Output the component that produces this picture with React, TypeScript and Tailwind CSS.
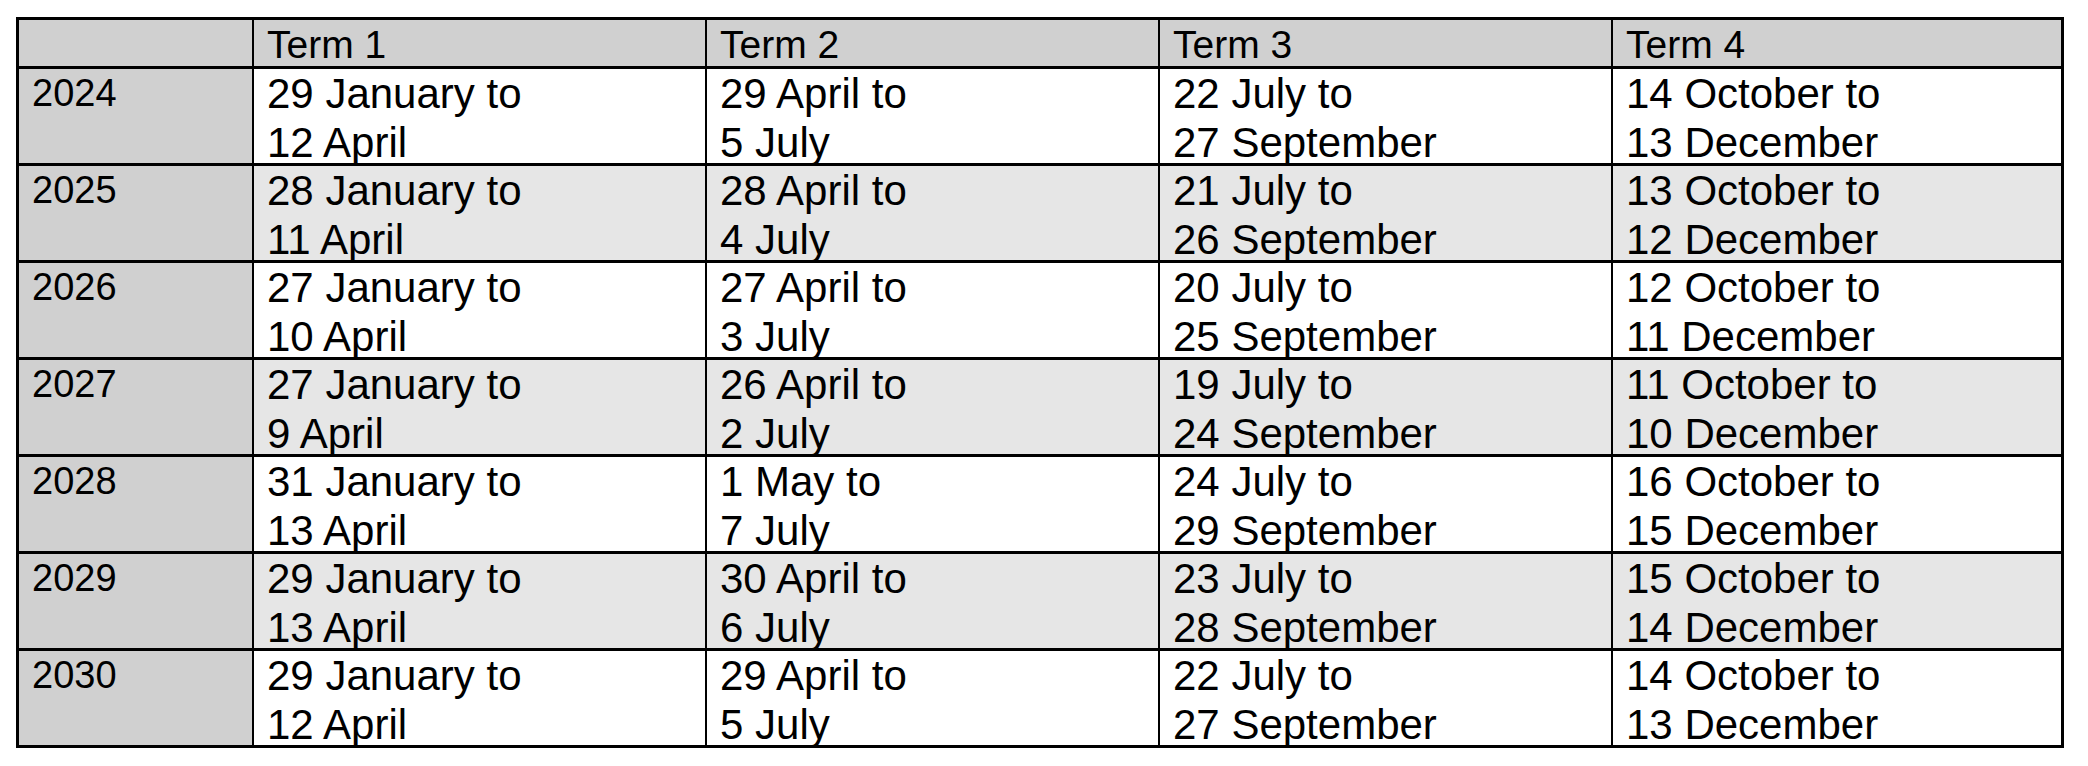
const terms = [
  { year: "2024", dates: [["29 January to", "12 April"], ["29 April to", "5 July"], ["22 July to", "27 September"], ["14 October to", "13 December"]] },
  { year: "2025", dates: [["28 January to", "11 April"], ["28 April to", "4 July"], ["21 July to", "26 September"], ["13 October to", "12 December"]] },
  { year: "2026", dates: [["27 January to", "10 April"], ["27 April to", "3 July"], ["20 July to", "25 September"], ["12 October to", "11 December"]] },
  { year: "2027", dates: [["27 January to", "9 April"], ["26 April to", "2 July"], ["19 July to", "24 September"], ["11 October to", "10 December"]] },
  { year: "2028", dates: [["31 January to", "13 April"], ["1 May to", "7 July"], ["24 July to", "29 September"], ["16 October to", "15 December"]] },
  { year: "2029", dates: [["29 January to", "13 April"], ["30 April to", "6 July"], ["23 July to", "28 September"], ["15 October to", "14 December"]] },
  { year: "2030", dates: [["29 January to", "12 April"], ["29 April to", "5 July"], ["22 July to", "27 September"], ["14 October to", "13 December"]] },
]

const headers = ["Term 1", "Term 2", "Term 3", "Term 4"]

export default function App() {
  return (
    <div className="w-[2088px] h-[766px] bg-white pt-[17px] pl-[16px]" style={{ fontFamily: '"Liberation Sans", Arial, sans-serif' }}>
      <div className="w-[2048px] border-[3px] border-black text-black">
        <div className="grid grid-cols-[233px_453px_453px_453px_450px]">
          {/* header row */}
          <div className="h-[46px] bg-[#d0d0d0]" />
          {headers.map((h) => (
            <div key={h} className="h-[46px] bg-[#d0d0d0] border-l-2 border-black pl-[13px] text-[39px] leading-[50px] overflow-visible whitespace-nowrap">
              {h}
            </div>
          ))}

          {terms.map((t, i) => {
            const rowBg = i % 2 === 1 ? "bg-[#e6e6e6]" : "bg-white"
            return [
              <div key={t.year} className="h-[97px] bg-[#d0d0d0] border-t-[3px] border-black pl-[13px] text-[38px] leading-[49px]">
                {t.year}
              </div>,
              ...t.dates.map((d, j) => (
                <div key={t.year + j} className={`h-[97px] ${rowBg} border-t-[3px] border-l-2 border-black pl-[13px] text-[42px] leading-[49px] whitespace-nowrap overflow-visible`}>
                  <div>{d[0]}</div>
                  <div>{d[1]}</div>
                </div>
              )),
            ]
          })}
        </div>
      </div>
    </div>
  )
}
